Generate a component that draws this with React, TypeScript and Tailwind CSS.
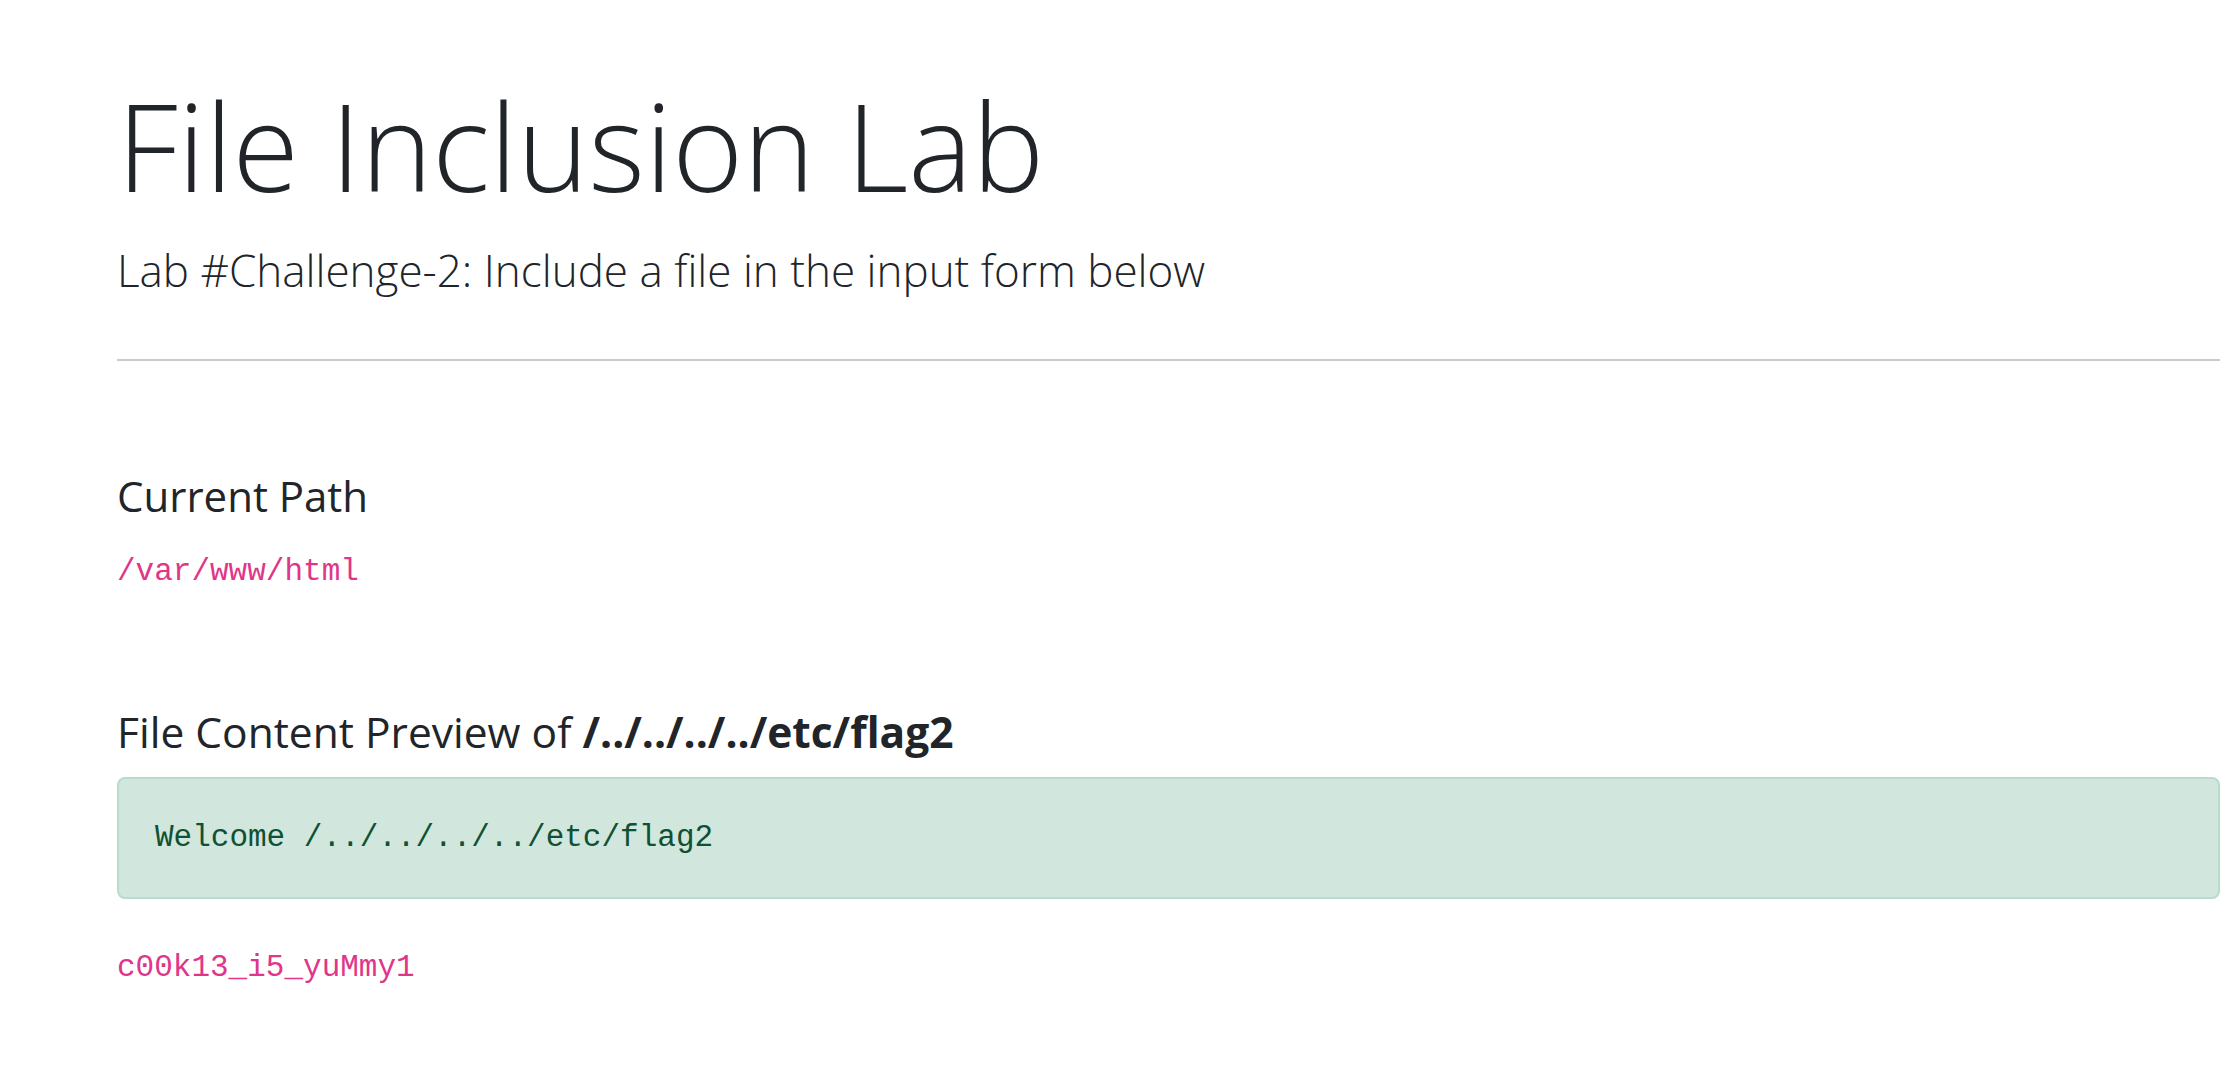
export default function App() {
  return (
    <div className="min-h-screen bg-white pl-[117px] pr-[6px] pt-[73px] text-[#212529] font-['Open_Sans',sans-serif]">
      <h1 className="text-[121px] leading-[144px] font-light">File Inclusion Lab</h1>
      <p className="mt-[20px] text-[44px] leading-[66px] font-light">
        Lab #Challenge-2: Include a file in the input form below
      </p>
      <hr className="mt-[56px] border-t-2 border-[#c9cacb]" />

      <h5 className="mt-[110px] text-[42px] leading-[50px]">Current Path</h5>
      <code className="mt-[28px] block text-[31px] leading-[46px] text-[#e0368a] font-['Liberation_Mono',monospace]">
        /var/www/html
      </code>

      <h4 className="mt-[110px] text-[42.5px] leading-[53px]">
        File Content Preview of <span className="font-bold">/../../../../etc/flag2</span>
      </h4>
      <div className="mt-[19px] rounded-[8px] border-2 border-[#badbcc] bg-[#d1e7dd] px-[36px] py-[36px] text-[#0f5132]">
        <pre className="text-[31px] leading-[46px] font-['Liberation_Mono',monospace]">Welcome /../../../../etc/flag2</pre>
      </div>
      <code className="mt-[46px] block text-[31px] leading-[46px] text-[#e0368a] font-['Liberation_Mono',monospace]">
        c00k13_i5_yuMmy1
      </code>
    </div>
  );
}
